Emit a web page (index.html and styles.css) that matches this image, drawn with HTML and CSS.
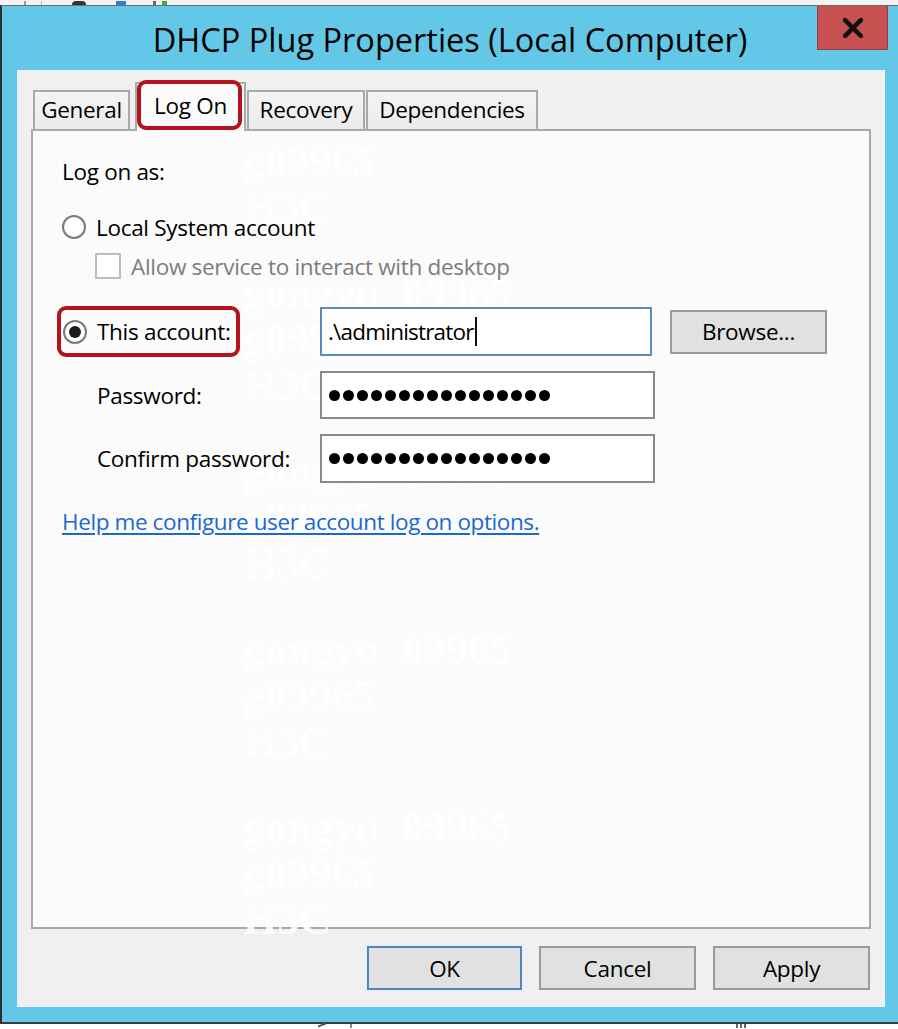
FILE: index.html
```html
<!DOCTYPE html>
<html lang="en">
<head>
<meta charset="utf-8">
<title>DHCP Plug Properties (Local Computer)</title>
<link rel="stylesheet" href="styles.css">
</head>
<body>
<div class="desk">
  <span class="dk dk-line"></span>
  <span class="dk dk-line2"></span>
  <span class="dk dk-dark"></span>
  <span class="dk dk-blue"></span>
  <span class="dk dk-grey"></span>
  <span class="dk dk-green"></span>
</div>
<div class="win">
  <div class="titlebar">
    <div class="title">DHCP Plug Properties (Local Computer)</div>
    <div class="close">
      <svg width="20" height="20" viewBox="0 0 20 20"><path d="M2 2 L18 18 M18 2 L2 18" stroke="#111" stroke-width="4.5" stroke-linecap="square" fill="none"/></svg>
    </div>
  </div>
  <div class="client">
    <div class="tabs">
      <div class="tab tab-general">General</div>
      <div class="tab tab-logon sel">Log On</div>
      <div class="tab tab-recovery">Recovery</div>
      <div class="tab tab-deps">Dependencies</div>
    </div>
    <div class="panel">
      <div class="logon-as">Log on as:</div>
      <div class="opt-row">
        <span class="radio"></span><span>Local System account</span>
      </div>
      <div class="check-row">
        <span class="check"></span><span>Allow service to interact with desktop</span>
      </div>
      <div class="acct-grid">
        <div class="hl"><span class="radio on"></span><span>This account:</span></div>
        <div class="field focus"><span>.\administrator</span><span class="caret"></span></div>
        <div class="btn browse">Browse...</div>
        <div class="lbl">Password:</div>
        <div class="field pw"><span class="dot"></span><span class="dot"></span><span class="dot"></span><span class="dot"></span><span class="dot"></span><span class="dot"></span><span class="dot"></span><span class="dot"></span><span class="dot"></span><span class="dot"></span><span class="dot"></span><span class="dot"></span><span class="dot"></span><span class="dot"></span><span class="dot"></span><span class="dot"></span></div>
        <div class="spacer"></div>
        <div class="lbl">Confirm password:</div>
        <div class="field pw"><span class="dot"></span><span class="dot"></span><span class="dot"></span><span class="dot"></span><span class="dot"></span><span class="dot"></span><span class="dot"></span><span class="dot"></span><span class="dot"></span><span class="dot"></span><span class="dot"></span><span class="dot"></span><span class="dot"></span><span class="dot"></span><span class="dot"></span><span class="dot"></span></div>
      </div>
      <a class="help" href="#">Help me configure user account log on options.</a>
    </div>
    <div class="actions">
      <div class="btn ok">OK</div>
      <div class="btn">Cancel</div>
      <div class="btn">Apply</div>
    </div>
  </div>
</div>
<div class="below">
  <span class="bl bl-tick"></span>
  <span class="bl bl-bar"></span>
  <span class="bl bl-bars"></span>
</div>
<div class="watermark">
  <div class="wm-block first"><div>g09965</div><div>H3C</div></div>
  <div class="wm-block"><div>gongyu&nbsp;&nbsp;09965</div><div>g09965</div><div>H3C</div></div>
  <div class="wm-block"><div>gongyu&nbsp;&nbsp;09965</div><div>g09965</div><div>H3C</div></div>
  <div class="wm-block"><div>gongyu&nbsp;&nbsp;09965</div><div>g09965</div><div>H3C</div></div>
  <div class="wm-block"><div>gongyu&nbsp;&nbsp;09965</div><div>g09965</div><div>H3C</div></div>
</div>
</body>
</html>
```

FILE: styles.css
```css
* { box-sizing: border-box; }

body {
  margin: 0;
  width: 898px;
  height: 1029px;
  overflow: hidden;
  background: #ffffff;
  position: relative;
  font-family: "Open Sans", "Noto Sans", sans-serif;
  color: #000;
}

/* desktop strip behind the window */
.desk {
  height: 5px;
  background: #f3f3f3;
  display: flex;
  align-items: flex-end;
}
.dk { display: block; height: 4px; }
.dk-line { width: 2px; background: #9a9a9a; margin-left: 24px; }
.dk-line2 { width: 1px; background: #b5b5b5; margin-left: 15px; }
.dk-dark { width: 14px; background: #333; border-radius: 6px 6px 0 0; margin-left: 30px; }
.dk-blue { width: 10px; background: #2f7fd0; margin-left: 30px; }
.dk-grey { width: 3px; background: #666; margin-left: 27px; }
.dk-green { width: 5px; background: #3cae3c; margin-left: 6px; }

/* window frame */
.win {
  height: 1019px;
  border-top: 1px solid #6f6f6f;
  border-left: 2px solid #2f2f2f;
  border-bottom: 2px solid #3c3c3c;
  background: #63c8e8;
  display: flex;
  flex-direction: column;
}

.titlebar {
  height: 64px;
  flex: none;
  display: grid;
  grid-template-columns: 1fr auto 1fr;
  align-items: start;
}
.title {
  grid-column: 2;
  font-size: 32.5px;
  padding-top: 11px;
  white-space: nowrap;
  color: #000;
}
.close {
  grid-column: 3;
  justify-self: end;
  margin-right: 10px;
  width: 71px;
  height: 44px;
  background: #c75050;
  border: 1px solid #9b3a3a;
  border-top: none;
  display: flex;
  align-items: center;
  justify-content: center;
  position: relative;
  z-index: 2;
}

.client {
  flex: 1;
  margin: 0 13px 15px 15px;
  background: #f0f0f0;
  padding: 12px 14px 17px 14px;
  display: flex;
  flex-direction: column;
}

/* tabs */
.tabs {
  display: flex;
  align-items: flex-end;
  padding-left: 2px;
  height: 47px;
  position: relative;
  z-index: 3;
}
.tab {
  height: 39px;
  border: 2px solid #a9a9a9;
  border-bottom: none;
  background: linear-gradient(#f4f4f4, #ebebeb);
  font-size: 22.5px;
  line-height: 35px;
  text-align: center;
  letter-spacing: -0.3px;
  color: #000;
}
.tab-general { width: 97px; }
.tab-logon { width: 111px; }
.tab-recovery { width: 118px; margin-left: 1px; }
.tab-deps { width: 172px; margin-left: 1px; }
.tab.sel {
  height: 49px;
  margin: 0 0 -2px 5px;
  background: #fbfbfb;
  position: relative;
  line-height: 43px;
  padding-bottom: 4px;
}
.tab.sel::after {
  content: "";
  position: absolute;
  left: 0;
  right: 2px;
  top: -4px;
  bottom: 1px;
  border: 4px solid #b3131d;
  border-radius: 9px;
}

/* panel */
.panel {
  flex: 1;
  background: #fbfbfb;
  border: 2px solid #a9a9a9;
  padding: 26px 20px 0 29px;
  display: flex;
  flex-direction: column;
  align-items: flex-start;
  font-size: 22.5px;
  letter-spacing: -0.3px;
}
.panel > * { position: relative; z-index: 2; }
.logon-as { line-height: 30px; }

.opt-row {
  margin-top: 25px;
  height: 30px;
  display: flex;
  align-items: center;
  gap: 10px;
}
.radio {
  width: 24px;
  height: 24px;
  border-radius: 50%;
  border: 2px solid #7b7b7b;
  background: radial-gradient(#ffffff 55%, #e6e6e6);
  display: inline-flex;
  align-items: center;
  justify-content: center;
  flex: none;
}
.radio.on::before {
  content: "";
  width: 12px;
  height: 12px;
  border-radius: 50%;
  background: #1c1c1c;
}

.check-row {
  margin-top: 9px;
  height: 30px;
  display: flex;
  align-items: center;
  gap: 10px;
  padding-left: 33px;
  color: #7d7d7d;
}
.check {
  width: 26px;
  height: 26px;
  border: 2px solid #bcbcbc;
  background: #fff;
  flex: none;
}

.acct-grid {
  margin-top: 26px;
  display: grid;
  grid-template-columns: 258px 335px auto;
  grid-template-rows: 49px 48px 49px;
  row-gap: 15px;
  align-items: center;
}
.hl {
  margin-left: -5px;
  width: 183px;
  height: 51px;
  border: 4px solid #b3131d;
  border-radius: 9px;
  display: flex;
  align-items: center;
  gap: 10px;
  padding-left: 2px;
}
.lbl { padding-left: 35px; }
.field {
  height: 100%;
  background: #fff;
  border: 2px solid #8a8a8a;
  display: flex;
  align-items: center;
  padding-left: 6px;
}
.field.focus {
  width: 332px;
  border-color: #5a8cc0;
  letter-spacing: -0.8px;
}
.caret {
  width: 2px;
  height: 29px;
  background: #111;
  margin-left: 1px;
}
.field.pw { gap: 3px; padding-left: 7px; }
.dot {
  width: 11px;
  height: 11px;
  border-radius: 50%;
  background: #000;
  flex: none;
}
.browse {
  margin-left: 15px;
  width: 157px;
  height: 45px;
}

.help {
  margin-top: 24px;
  line-height: 30px;
  color: #1c68cf;
  letter-spacing: -0.4px;
  text-decoration: underline;
  text-underline-offset: 3px;
}

/* buttons */
.actions {
  margin-top: 17px;
  display: flex;
  justify-content: flex-end;
  gap: 17px;
  padding-right: 1px;
  position: relative;
  z-index: 2;
}
.btn {
  width: 157px;
  height: 44px;
  background: #e1e1e1;
  border: 2px solid #9a9a9a;
  display: flex;
  align-items: center;
  justify-content: center;
  font-size: 22.5px;
  letter-spacing: -0.3px;
  color: #000;
}
.btn.ok {
  width: 155px;
  border-color: #4a86bf;
}

/* below the window */
.below {
  height: 5px;
  display: flex;
  align-items: flex-start;
}
.bl { display: block; height: 4px; }
.bl-tick { width: 8px; margin-left: 318px; border-top: 2px solid #555; transform: skewY(-20deg); }
.bl-bar { width: 2px; background: #888; margin-left: 24px; }
.bl-bars { width: 10px; margin-left: 384px; background: repeating-linear-gradient(90deg, #666 0 2px, transparent 2px 4px); }

/* faint watermark, painted above backgrounds but below the controls */
.watermark {
  position: absolute;
  left: 243px;
  top: 139px;
  pointer-events: none;
  font-family: "Liberation Serif", "DejaVu Serif", serif;
  font-weight: bold;
  font-size: 44px;
  line-height: 46px;
  color: rgba(255, 255, 255, 0.9);
  white-space: nowrap;
  z-index: 1;
}
.wm-block { height: 178px; }
.wm-block.first { height: 132px; }
```
